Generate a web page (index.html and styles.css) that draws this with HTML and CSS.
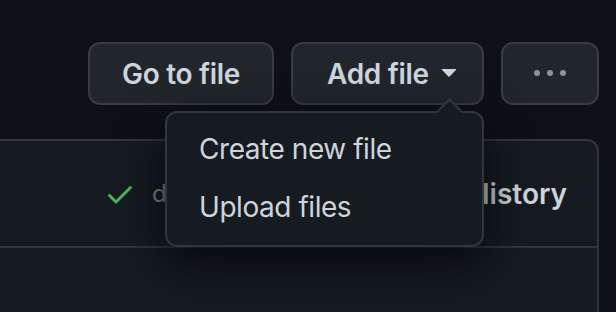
FILE: index.html
```html
<!DOCTYPE html>
<html lang="en">
<head>
    <meta charset="UTF-8">
    <meta name="viewport" content="width=device-width, initial-scale=1.0">
    <title>Repository files</title>
    <link rel="stylesheet" href="styles.css">
</head>
<body>
    <div class="page">
        <div class="toolbar">
            <button class="btn btn-goto">Go to file</button>

            <div class="add-file">
                <button class="btn btn-add">
                    <span>Add file</span>
                    <svg class="caret-icon" viewBox="0 0 16 16" width="32" height="32" aria-hidden="true">
                        <path d="m4.427 7.427 3.396 3.396a.25.25 0 0 0 .354 0l3.396-3.396A.25.25 0 0 0 11.396 7H4.604a.25.25 0 0 0-.177.427Z"></path>
                    </svg>
                </button>

                <div class="menu">
                    <span class="menu-caret"></span>
                    <a class="menu-item" href="#">Create new file</a>
                    <a class="menu-item" href="#">Upload files</a>
                </div>
            </div>

            <button class="btn btn-more" aria-label="More options">
                <svg viewBox="0 0 16 16" width="32" height="32" aria-hidden="true">
                    <path d="M8 9a1.5 1.5 0 1 0 0-3 1.5 1.5 0 0 0 0 3ZM1.5 9a1.5 1.5 0 1 0 0-3 1.5 1.5 0 0 0 0 3Zm13 0a1.5 1.5 0 1 0 0-3 1.5 1.5 0 0 0 0 3Z"></path>
                </svg>
            </button>
        </div>

        <div class="file-box">
            <div class="commit-row">
                <svg class="check-icon" viewBox="0 0 16 16" width="32" height="32" aria-hidden="true">
                    <path d="M13.78 4.22a.75.75 0 0 1 0 1.06l-7.25 7.25a.75.75 0 0 1-1.06 0L2.22 9.28a.751.751 0 0 1 .018-1.042.751.751 0 0 1 1.042-.018L6 10.94l6.72-6.72a.75.75 0 0 1 1.06 0Z"></path>
                </svg>
                <span class="commit-meta">d41c7e2</span>
                <a class="history-link" href="#">
                    <svg class="history-icon" viewBox="0 0 16 16" width="32" height="32" aria-hidden="true">
                        <path d="m.427 1.927 1.215 1.215a8.002 8.002 0 1 1-1.6 5.685.75.75 0 1 1 1.493-.154 6.5 6.5 0 1 0 1.18-4.458l1.358 1.358A.25.25 0 0 1 3.896 6H.25A.25.25 0 0 1 0 5.75V2.104a.25.25 0 0 1 .427-.177ZM7.75 4a.75.75 0 0 1 .75.75v2.992l2.028.812a.75.75 0 0 1-.557 1.392l-2.5-1A.751.751 0 0 1 7 8.25v-3.5A.75.75 0 0 1 7.75 4Z"></path>
                    </svg>
                    History
                </a>
            </div>
            <div class="file-row"></div>
        </div>
    </div>
</body>
</html>
```

FILE: styles.css
```css
:root {
    --canvas: #0d1117;
    --surface: #161b22;
    --btn-bg: #21262d;
    --btn-border: #373c43;
    --border: #30363d;
    --text: #cdd4dc;
    --muted: #7d8590;
    --success: #4cb45a;
    --radius: 12px;
}

* {
    box-sizing: border-box;
    margin: 0;
    padding: 0;
    font-family: Inter, 'Liberation Sans', sans-serif;
}

body {
    background-color: var(--canvas);
    color: var(--text);
    overflow: hidden;
}

.page {
    padding: 42px 17px 0 0;
}

.toolbar {
    display: flex;
    justify-content: flex-end;
    gap: 17px;
}

.btn {
    height: 63px;
    display: flex;
    align-items: center;
    justify-content: center;
    background-color: var(--btn-bg);
    border: 2px solid var(--btn-border);
    border-radius: var(--radius);
    color: var(--text);
    font-size: 28px;
    font-weight: 600;
    letter-spacing: -0.3px;
    cursor: pointer;
}

.btn-goto {
    width: 186px;
}

.add-file {
    position: relative;
}

.btn-add {
    width: 193px;
    justify-content: flex-start;
    padding-left: 34px;
    gap: 4px;
}

.caret-icon {
    fill: var(--text);
    margin-top: -5px;
}

.btn-more {
    width: 98px;
}

.btn-more svg {
    fill: #8b949e;
}

/* dropdown menu */
.menu {
    position: absolute;
    top: calc(100% + 6px);
    right: 0;
    width: 319px;
    padding: 7px 0 9px;
    display: flex;
    flex-direction: column;
    background-color: var(--surface);
    border: 2px solid var(--border);
    border-radius: var(--radius);
    box-shadow: 0 16px 48px rgba(1, 4, 9, 0.8);
    z-index: 10;
}

.menu-caret {
    position: absolute;
    top: -11.5px;
    right: 23px;
    width: 19px;
    height: 19px;
    background-color: var(--surface);
    border-top: 2px solid var(--border);
    border-left: 2px solid var(--border);
    transform: rotate(45deg);
}

.menu-item {
    height: 58px;
    display: flex;
    align-items: center;
    padding-left: 32px;
    color: var(--text);
    font-size: 28px;
    letter-spacing: -0.45px;
    text-decoration: none;
}

/* file box */
.file-box {
    margin-top: 34px;
    margin-left: -24px;
    background-color: var(--surface);
    border: 2px solid var(--border);
    border-bottom: 0;
    border-radius: var(--radius) var(--radius) 0 0;
}

.commit-row {
    height: 107px;
    display: flex;
    align-items: center;
    padding: 0 30px 0 126px;
    border-bottom: 2px solid var(--border);
}

.check-icon {
    fill: var(--success);
    flex-shrink: 0;
}

.commit-meta {
    margin-left: 16px;
    color: var(--muted);
    font-size: 24px;
    white-space: nowrap;
}

.history-link {
    margin-left: auto;
    display: flex;
    align-items: center;
    gap: 8px;
    color: var(--text);
    font-size: 28px;
    font-weight: 600;
    text-decoration: none;
}

.history-icon {
    fill: var(--muted);
}

.file-row {
    height: 64px;
}
```
